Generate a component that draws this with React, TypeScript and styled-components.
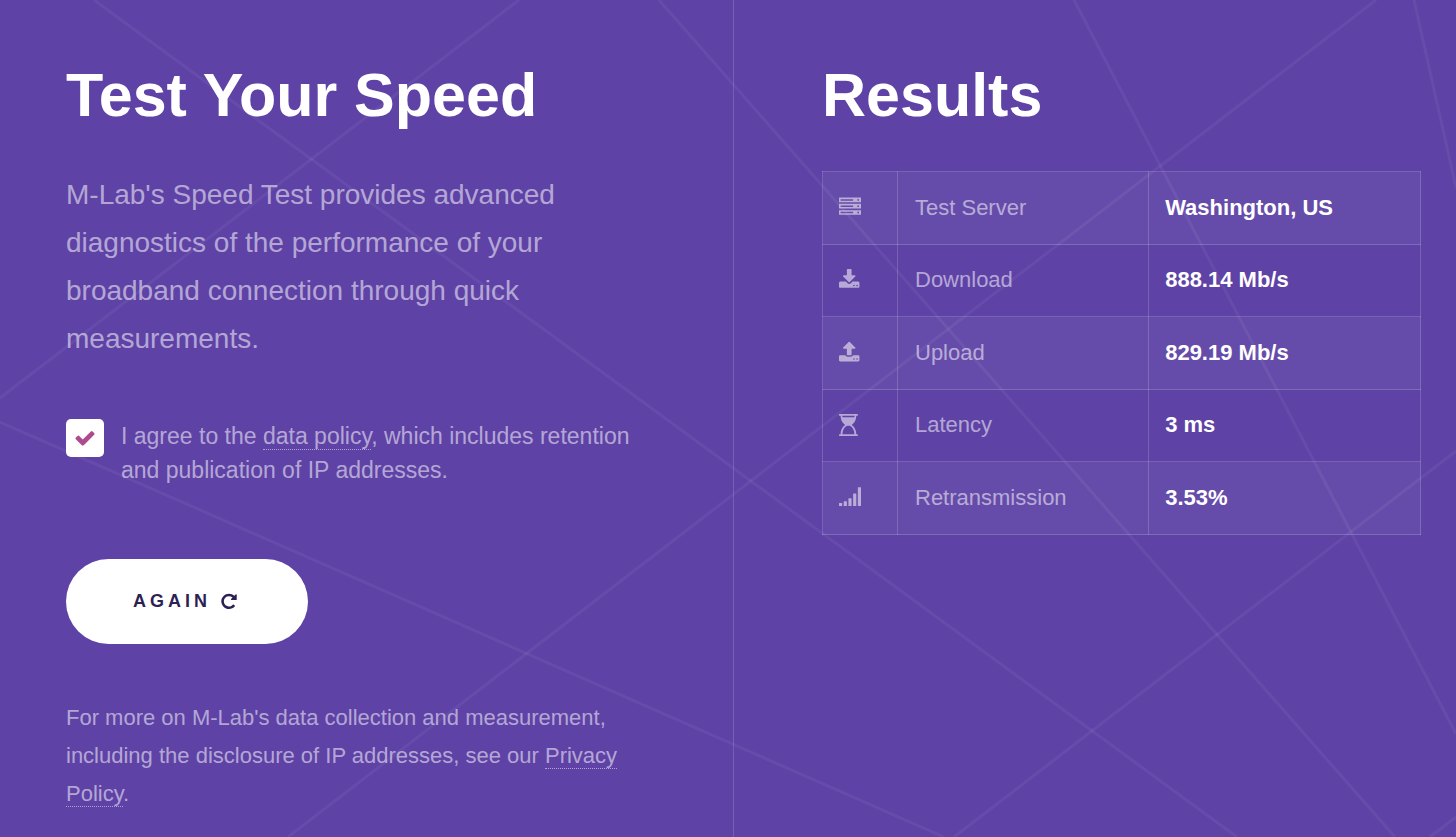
import React, { useState } from 'react';
import styled, { createGlobalStyle } from 'styled-components';

const GlobalStyle = createGlobalStyle`
  *, *::before, *::after {
    box-sizing: border-box;
  }
  body {
    margin: 0;
    background: #5e42a6;
    color: rgba(255, 255, 255, 0.55);
    font-family: "Liberation Sans", Arial, Helvetica, sans-serif;
    font-size: 22px;
  }
`;

const Page = styled.main`
  position: relative;
  isolation: isolate;
  display: grid;
  grid-template-columns: 734fr 722fr;
  min-height: 100vh;
  overflow: hidden;
`;

const Backdrop = styled.svg`
  position: absolute;
  inset: 0;
  z-index: -1;
  width: 100%;
  height: 100%;
  fill: none;
  stroke: #ffffff;
  stroke-opacity: 0.055;
  stroke-width: 3;
`;

const TestPanel = styled.section`
  padding: 61px 88px 20px 66px;
  border-right: 1px solid rgba(255, 255, 255, 0.15);
`;

const ResultsPanel = styled.section`
  padding: 61px 35px 20px 88px;
`;

const Title = styled.h1`
  margin: 0 0 42px;
  color: #ffffff;
  font-size: 61px;
  line-height: 68px;
  font-weight: 700;
`;

const Lead = styled.p`
  margin: 0 0 56px;
  font-size: 28px;
  line-height: 48px;
`;

const Consent = styled.div`
  display: flex;
  align-items: flex-start;
  gap: 17px;
  margin-bottom: 72px;
`;

const CheckControl = styled.span`
  display: grid;
  flex: none;
  place-items: center;

  > * {
    grid-area: 1 / 1;
  }
`;

const CheckInput = styled.input`
  appearance: none;
  width: 38px;
  height: 38px;
  margin: 0;
  border-radius: 5px;
  background: #ffffff;
  cursor: pointer;
`;

const ConsentLabel = styled.label`
  font-size: 23px;
  line-height: 34px;
`;

const TextLink = styled.a`
  color: inherit;
  text-decoration: none;
  border-bottom: 1px dotted rgba(255, 255, 255, 0.5);
`;

const AgainButton = styled.button`
  display: inline-flex;
  align-items: center;
  justify-content: center;
  gap: 9px;
  height: 85px;
  padding: 0 70px 0 67px;
  border: 0;
  border-radius: 43px;
  background: #ffffff;
  color: #2e1f54;
  font-family: inherit;
  font-size: 18px;
  font-weight: 700;
  letter-spacing: 4px;
  cursor: pointer;
`;

const Note = styled.p`
  margin: 55px 0 0;
  line-height: 38px;
`;

const ResultsTable = styled.table`
  width: 100%;
  border-collapse: collapse;
  table-layout: fixed;
`;

const Cell = styled.td`
  padding: 0 16px;
  border: 1px solid rgba(255, 255, 255, 0.17);
  text-align: left;
  font-weight: 400;
`;

const IconCell = styled(Cell)`
  width: 75px;
`;

const NameCell = styled(Cell)`
  width: 42%;
  padding-left: 17px;
`;

const ValueCell = styled(Cell)`
  color: #ffffff;
  font-weight: 700;
`;

const ResultRow = styled.tr`
  height: 72px;

  &:nth-child(odd) {
    height: 73px;
    background: rgba(255, 255, 255, 0.055);
  }

  &:nth-child(even) > * {
    padding-bottom: 2px;
  }

  & > ${IconCell} {
    padding-bottom: 2px;
  }
`;

const Glyph = styled.svg<{ $size?: number; $color?: string }>`
  display: block;
  flex: none;
  width: ${({ $size = 22 }) => $size}px;
  height: ${({ $size = 22 }) => $size}px;
  fill: ${({ $color = 'currentColor' }) => $color};
  overflow: visible;
  pointer-events: none;
`;

const ServerIcon = () => (
  <Glyph viewBox="0 0 1792 1792" aria-hidden="true">
    <path
      fillRule="evenodd"
      d="M0 128h1792v384H0zM128 256v128h1024V256zM1560 248a72 72 0 1 0 0 144 72 72 0 1 0 0-144zM0 640h1792v384H0zM128 768v128h1024V768zM1560 760a72 72 0 1 0 0 144 72 72 0 1 0 0-144zM0 1152h1792v384H0zM128 1280v128h1024v-128zM1560 1272a72 72 0 1 0 0 144 72 72 0 1 0 0-144z"
    />
  </Glyph>
);

const DownloadIcon = () => (
  <Glyph viewBox="64 0 1792 1792" aria-hidden="true">
    <path d="M1344 1344q0-26-19-45t-45-19-45 19-19 45 19 45 45 19 45-19 19-45zm256 0q0-26-19-45t-45-19-45 19-19 45 19 45 45 19 45-19 19-45zm128-224v320q0 40-28 68t-68 28h-1472q-40 0-68-28t-28-68v-320q0-40 28-68t68-28h465l135 136q58 56 136 56t136-56l136-136h464q40 0 68 28t28 68zm-325-569q17 41-14 70l-448 448q-18 19-45 19t-45-19l-448-448q-31-29-14-70 17-39 59-39h256v-448q0-26 19-45t45-19h256q26 0 45 19t19 45v448h256q42 0 59 39z" />
  </Glyph>
);

const UploadIcon = () => (
  <Glyph viewBox="64 0 1792 1792" aria-hidden="true">
    <path d="M1344 1472q0-26-19-45t-45-19-45 19-19 45 19 45 45 19 45-19 19-45zm256 0q0-26-19-45t-45-19-45 19-19 45 19 45 45 19 45-19 19-45zm128-224v320q0 40-28 68t-68 28h-1472q-40 0-68-28t-28-68v-320q0-40 28-68t68-28h427q21 56 70.500 92t110.500 36h256q61 0 110.500-36t70.500-92h427q40 0 68 28t28 68zm-325-648q-17 40-59 40h-256v448q0 26-19 45t-45 19h-256q-26 0-45-19t-19-45v-448h-256q-42 0-59-40-17-39 14-69l448-448q18-19 45-19t45 19l448 448q31 30 14 69z" />
  </Glyph>
);

const HourglassIcon = () => (
  <Glyph viewBox="0 0 1792 1792" aria-hidden="true">
    <path
      fillRule="evenodd"
      d="M32 0h1472q32 0 32 32v80q0 32-32 32h-96c0 348-150 604-373 752 223 148 373 404 373 752h96q32 0 32 32v80q0 32-32 32H32q-32 0-32-32v-80q0-32 32-32h96c0-348 150-604 373-752C278 748 128 492 128 144H32Q0 144 0 112V32Q0 0 32 0zM272 144q0 60 8 112h976q8-52 8-112zM280 1648h976c0-330-150-588-376-700H656c-226 112-376 370-376 700z"
    />
  </Glyph>
);

const SignalIcon = () => (
  <Glyph viewBox="0 0 1792 1792" aria-hidden="true">
    <rect x="0" y="1380" width="256" height="256" rx="32" />
    <rect x="384" y="1252" width="256" height="384" rx="32" />
    <rect x="768" y="996" width="256" height="640" rx="32" />
    <rect x="1152" y="612" width="256" height="1024" rx="32" />
    <rect x="1536" y="100" width="256" height="1536" rx="32" />
  </Glyph>
);

const CheckIcon = () => (
  <Glyph viewBox="0 0 1792 1792" $color="#b04a8f" aria-hidden="true">
    <path d="M1671 566q0 40-28 68l-724 724-136 136q-28 28-68 28t-68-28l-136-136-362-362q-28-28-28-68t28-68l136-136q28-28 68-28t68 28l294 295 656-657q28-28 68-28t68 28l136 136q28 28 28 68z" />
  </Glyph>
);

const RepeatIcon = () => (
  <Glyph viewBox="128 64 1536 1792" $size={18} aria-hidden="true">
    <path d="M1664 256v448q0 26-19 45t-45 19h-448q-42 0-59-40-17-39 14-69l138-138q-148-137-349-137-104 0-198.500 40.500t-163.500 109.500-109.500 163.500-40.500 198.500 40.500 198.500 109.500 163.500 163.500 109.500 198.500 40.500q119 0 225-52t179-147q7-10 23-12 15 0 25 9l137 138q9 8 9.500 20.500t-7.500 22.500q-109 132-264 204.500t-327 72.500q-156 0-298-61t-245-164-164-245-61-298 61-298 164-245 245-164 298-61q147 0 284.500 55.500t244.500 156.500l130-129q29-31 70-14 39 17 39 59z" />
  </Glyph>
);

const results = [
  { name: 'Test Server', value: 'Washington, US', Icon: ServerIcon },
  { name: 'Download', value: '888.14 Mb/s', Icon: DownloadIcon },
  { name: 'Upload', value: '829.19 Mb/s', Icon: UploadIcon },
  { name: 'Latency', value: '3 ms', Icon: HourglassIcon },
  { name: 'Retransmission', value: '3.53%', Icon: SignalIcon },
];

export default function App() {
  const [agreed, setAgreed] = useState(true);

  return (
    <>
      <GlobalStyle />
      <Page>
        <Backdrop viewBox="0 0 1456 837" preserveAspectRatio="xMidYMid slice" aria-hidden="true">
          <path d="M94 0L1237 837" />
          <path d="M519 0L0 398" />
          <path d="M0 422L944 837" />
          <path d="M659 0L1395 837" />
          <path d="M1376 0L288 837" />
          <path d="M1074 0L1456 734" />
          <path d="M1414 0L1456 188" />
          <path d="M954 837L1456 451" />
          <path d="M1430 837L1456 817" />
        </Backdrop>

        <TestPanel>
          <Title>Test Your Speed</Title>
          <Lead>
            M-Lab's Speed Test provides advanced diagnostics of the performance of your broadband
            connection through quick measurements.
          </Lead>
          <Consent>
            <CheckControl>
              <CheckInput
                id="agree"
                type="checkbox"
                checked={agreed}
                onChange={(event) => setAgreed(event.target.checked)}
              />
              {agreed && <CheckIcon />}
            </CheckControl>
            <ConsentLabel htmlFor="agree">
              I agree to the <TextLink href="#data-policy">data policy</TextLink>, which includes
              retention and publication of IP addresses.
            </ConsentLabel>
          </Consent>
          <AgainButton type="button" disabled={!agreed}>
            AGAIN
            <RepeatIcon />
          </AgainButton>
          <Note>
            For more on M-Lab's data collection and measurement, including the disclosure of IP
            addresses, see our <TextLink href="#privacy">Privacy Policy</TextLink>.
          </Note>
        </TestPanel>

        <ResultsPanel>
          <Title as="h2">Results</Title>
          <ResultsTable>
            <tbody>
              {results.map(({ name, value, Icon }) => (
                <ResultRow key={name}>
                  <IconCell>
                    <Icon />
                  </IconCell>
                  <NameCell as="th" scope="row">
                    {name}
                  </NameCell>
                  <ValueCell>{value}</ValueCell>
                </ResultRow>
              ))}
            </tbody>
          </ResultsTable>
        </ResultsPanel>
      </Page>
    </>
  );
}
